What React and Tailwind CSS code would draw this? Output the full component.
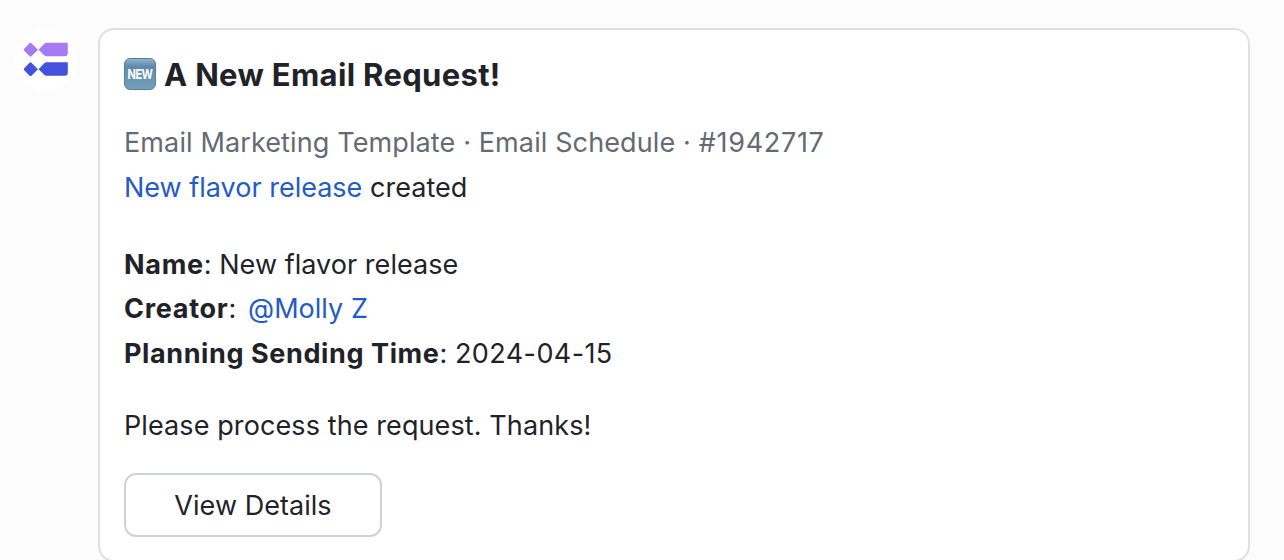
export default function App() {
  return (
    <main className="flex h-[560px] w-full gap-[22px] overflow-hidden bg-[#fcfcfc] pl-[15px] pt-[29px] font-['Inter',sans-serif] text-[#1f2329]">
      <div className="flex size-[62px] -mr-px shrink-0 items-center justify-center rounded-full bg-white">
        <svg viewBox="0 0 46 36" className="h-9 w-[46px]">
          <path d="M1.2 8.7q-1-1 0-2L6.3 1.4q1.2-1.2 2.4 0L15 7.7 8.7 14q-1.2 1.2-2.4 0L1.2 8.7Z" fill="#a67af4" />
          <path d="M15.5 7.7 21.5 1.5q.7-.8 1.8-.8H44.8V11.3q0 3-3 3H23.3q-1.1 0-1.8-.8Z" fill="#a67af4" />
          <path d="M1.2 28.2q-1-1 0-2L6.3 20.9q1.2-1.2 2.4 0L15 27.2 8.7 33.5q-1.2 1.2-2.4 0L1.2 28.2Z" fill="#4252df" />
          <path d="M15.5 27.2 21.5 21q.7-.8 1.8-.8H44.8V30.8q0 3-3 3H23.3q-1.1 0-1.8-.8Z" fill="#4252df" />
        </svg>
      </div>
      <article className="-mt-px flex h-[534px] w-[1152px] shrink-0 flex-col items-start rounded-2xl border-2 border-[#dee0e3] bg-white px-6 pt-[22px] text-[27px] leading-[44.5px] tracking-[0.04px]">
        <h1 className="flex items-center gap-2 text-[31px] font-bold leading-[45px] tracking-[0.33px]">
          <span className="mb-[2px] flex size-8 items-center justify-center rounded-md border border-[#58809c] bg-linear-to-b from-[#8db4d0] via-[#5f8aa8] via-25% to-[#73a0bb] text-white">
            <span className="scale-y-125 text-[11px] leading-4 tracking-[-0.5px]">NEW</span>
          </span>
          <span>A New Email Request!</span>
        </h1>
        <p className="mt-6 tracking-[0.12px] text-[#646a73]">Email Marketing Template · Email Schedule · <span className="tracking-[0.7px]">#1942717</span></p>
        <p><a className="tracking-normal text-[#245bc5]">New flavor release</a> created</p>
        <p className="mt-[32.5px]"><b className="font-bold tracking-[0.7px]">Name</b>: New flavor release</p>
        <p><b className="font-bold tracking-[0.72px]">Creator</b>: <a className="ml-[4px] text-[#245bc5]">@Molly Z</a></p>
        <p><b className="font-bold tracking-[0.6px]">Planning Sending Time</b>: <span className="tracking-[0.4px]">2024-04-15</span></p>
        <p className="mt-[28px] tracking-[0.1px]">Please process the request. Thanks!</p>
        <button className="mt-[24.5px] h-16 w-[258px] rounded-xl border-2 border-[#d0d3d6] pt-[2px]">View Details</button>
      </article>
    </main>
  );
}
